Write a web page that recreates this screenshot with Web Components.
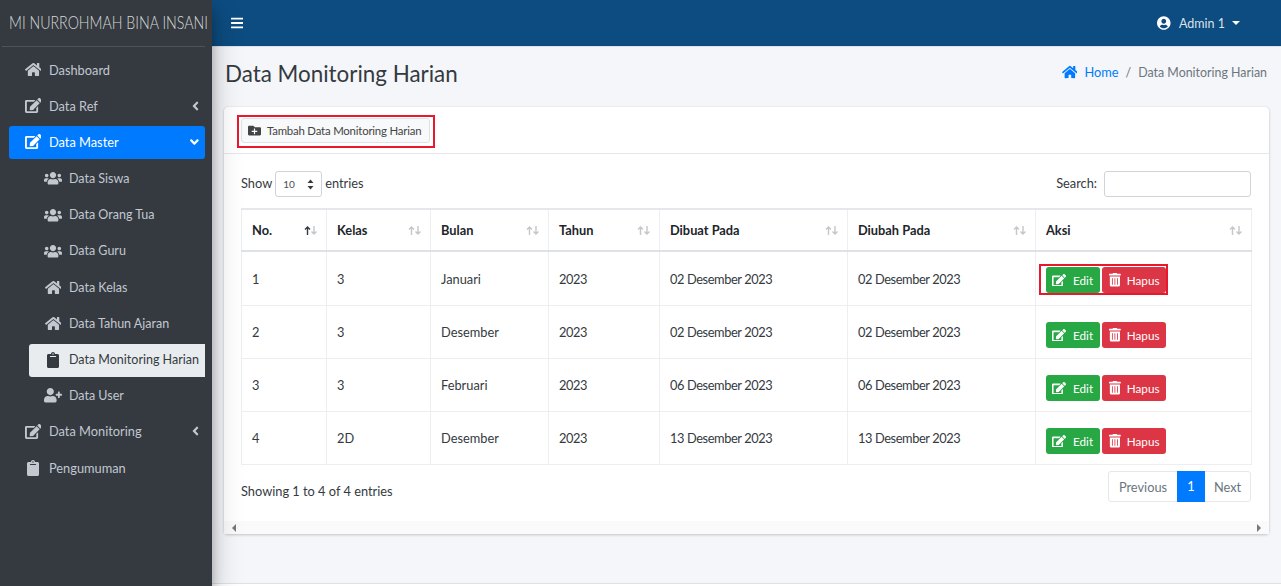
<!DOCTYPE html>
<html lang="id">
<head>
<meta charset="utf-8">
<title>Data Monitoring Harian</title>
<style>
  html, body { margin: 0; height: 100%; overflow: hidden; }
  body { display: flex; font-family: Lato, "Noto Sans", sans-serif; font-size: 12.8px; color: #343a40; background: #f4f6f9; }
</style>
</head>
<body>
<app-sidebar>
  <side-item icon="home">Dashboard</side-item>
  <side-item icon="edit" arrow="left">Data Ref</side-item>
  <side-item icon="edit" arrow="down" state="open">Data Master</side-item>
  <side-item icon="users" level="2">Data Siswa</side-item>
  <side-item icon="users" level="2">Data Orang Tua</side-item>
  <side-item icon="users" level="2">Data Guru</side-item>
  <side-item icon="home" level="2">Data Kelas</side-item>
  <side-item icon="home" level="2">Data Tahun Ajaran</side-item>
  <side-item icon="clipboard" level="2" state="current">Data Monitoring Harian</side-item>
  <side-item icon="userplus" level="2">Data User</side-item>
  <side-item icon="edit" arrow="left">Data Monitoring</side-item>
  <side-item icon="clipboard">Pengumuman</side-item>
</app-sidebar>
<app-main>
  <top-bar></top-bar>
  <page-header></page-header>
  <monitoring-card></monitoring-card>
</app-main>

<script>
const ICONS = {
  home: ['0 0 576 512', 'M280.37 148.26L96 300.11V464a16 16 0 0 0 16 16l112.06-.29a16 16 0 0 0 15.92-16V368a16 16 0 0 1 16-16h64a16 16 0 0 1 16 16v95.64a16 16 0 0 0 16 16.05L464 480a16 16 0 0 0 16-16V300L295.67 148.26a12.19 12.19 0 0 0-15.3 0zM571.6 251.47L488 182.56V44.05a12 12 0 0 0-12-12h-56a12 12 0 0 0-12 12v72.61L318.47 43a48 48 0 0 0-61 0L4.34 251.47a12 12 0 0 0-1.6 16.9l25.5 31A12 12 0 0 0 45.15 301l235.22-193.74a12.19 12.19 0 0 1 15.3 0L530.9 301a12 12 0 0 0 16.9-1.6l25.5-31a12 12 0 0 0-1.7-16.93z'],
  edit: ['0 0 576 512', 'M402.6 83.2l90.2 90.2c3.8 3.8 3.8 10 0 13.8L274.4 405.6l-92.8 10.3c-12.4 1.4-22.9-9.1-21.5-21.5l10.3-92.8L388.8 83.2c3.8-3.8 10-3.8 13.8 0zm162-22.9l-48.8-48.8c-15.2-15.2-39.9-15.2-55.2 0l-35.4 35.4c-3.8 3.8-3.8 10 0 13.8l90.2 90.2c3.8 3.8 10 3.8 13.8 0l35.4-35.4c15.2-15.3 15.2-40 0-55.2zM384 346.2V448H64V128h229.8c3.2 0 6.2-1.3 8.5-3.5l40-40c7.6-7.6 2.2-20.5-8.5-20.5H48C21.5 64 0 85.5 0 112v352c0 26.5 21.5 48 48 48h352c26.5 0 48-21.5 48-48V306.2c0-10.7-12.9-16-20.5-8.5l-40 40c-2.2 2.3-3.5 5.3-3.5 8.5z'],
  users: ['0 0 640 512', 'M96 224c35.3 0 64-28.7 64-64s-28.7-64-64-64-64 28.7-64 64 28.7 64 64 64zm448 0c35.3 0 64-28.7 64-64s-28.7-64-64-64-64 28.7-64 64 28.7 64 64 64zm32 32h-64c-17.6 0-33.5 7.1-45.1 18.6 40.3 22.1 68.9 62 75.1 109.4h66c17.7 0 32-14.3 32-32v-32c0-35.3-28.7-64-64-64zm-256 0c61.9 0 112-50.1 112-112S381.9 32 320 32 208 82.1 208 144s50.1 112 112 112zm76.8 32h-8.3c-20.8 10-43.9 16-68.5 16s-47.6-6-68.5-16h-8.3C179.6 288 128 339.6 128 403.2V432c0 26.5 21.5 48 48 48h288c26.5 0 48-21.5 48-48v-28.8c0-63.6-51.6-115.2-115.2-115.2zm-223.7-13.4C161.5 263.1 145.6 256 128 256H64c-35.3 0-64 28.7-64 64v32c0 17.7 14.3 32 32 32h65.9c6.3-47.4 34.9-87.3 75.2-109.4z'],
  clipboard: ['0 0 384 512', 'M384 112v352c0 26.51-21.49 48-48 48H48c-26.51 0-48-21.49-48-48V112c0-26.51 21.49-48 48-48h80c0-35.29 28.71-64 64-64s64 28.71 64 64h80c26.51 0 48 21.49 48 48zM192 40c-13.255 0-24 10.745-24 24s10.745 24 24 24 24-10.745 24-24-10.745-24-24-24m96 114v-20a6 6 0 0 0-6-6H102a6 6 0 0 0-6 6v20a6 6 0 0 0 6 6h180a6 6 0 0 0 6-6z'],
  userplus: ['0 0 640 512', 'M624 208h-64v-64c0-8.8-7.2-16-16-16h-32c-8.8 0-16 7.2-16 16v64h-64c-8.8 0-16 7.2-16 16v32c0 8.8 7.2 16 16 16h64v64c0 8.8 7.2 16 16 16h32c8.8 0 16-7.2 16-16v-64h64c8.8 0 16-7.2 16-16v-32c0-8.8-7.2-16-16-16zm-400 48c70.7 0 128-57.3 128-128S294.7 0 224 0 96 57.3 96 128s57.3 128 128 128zm89.6 32h-16.7c-22.2 10.2-46.9 16-72.9 16s-50.6-5.8-72.9-16h-16.7C60.2 288 0 348.2 0 422.4V464c0 26.5 21.5 48 48 48h352c26.5 0 48-21.5 48-48v-41.6c0-74.2-60.2-134.4-134.4-134.4z'],
  bars: ['0 0 448 512', 'M16 132h416c8.837 0 16-7.163 16-16V76c0-8.837-7.163-16-16-16H16C7.163 60 0 67.163 0 76v40c0 8.837 7.163 16 16 16zm0 160h416c8.837 0 16-7.163 16-16v-40c0-8.837-7.163-16-16-16H16c-8.837 0-16 7.163-16 16v40c0 8.837 7.163 16 16 16zm0 160h416c8.837 0 16-7.163 16-16v-40c0-8.837-7.163-16-16-16H16c-8.837 0-16 7.163-16 16v40c0 8.837 7.163 16 16 16z'],
  usercircle: ['0 0 496 512', 'M248 8C111 8 0 119 0 256s111 248 248 248 248-111 248-248S385 8 248 8zm0 96c48.6 0 88 39.4 88 88s-39.4 88-88 88-88-39.4-88-88 39.4-88 88-88zm0 344c-58.7 0-111.3-26.6-146.5-68.2 18.8-35.4 55.6-59.8 98.5-59.8 2.4 0 4.8.4 7.1 1.1 13 4.2 26.6 6.9 40.9 6.9 14.3 0 28-2.7 40.9-6.9 2.3-.7 4.7-1.1 7.1-1.1 42.9 0 79.7 24.4 98.5 59.8C359.3 421.4 306.7 448 248 448z'],
  trash: ['0 0 448 512', 'M32 464a48 48 0 0 0 48 48h288a48 48 0 0 0 48-48V128H32zm272-256a16 16 0 0 1 32 0v224a16 16 0 0 1-32 0zm-96 0a16 16 0 0 1 32 0v224a16 16 0 0 1-32 0zm-96 0a16 16 0 0 1 32 0v224a16 16 0 0 1-32 0zM432 32H312l-9.4-18.7A24 24 0 0 0 281.1 0H166.8a23.72 23.72 0 0 0-21.4 13.3L136 32H16A16 16 0 0 0 0 48v32a16 16 0 0 0 16 16h416a16 16 0 0 0 16-16V48a16 16 0 0 0-16-16z'],
  folderplus: ['0 0 512 512', 'M464 128H272l-64-64H48C21.49 64 0 85.49 0 112v288c0 26.51 21.49 48 48 48h416c26.51 0 48-21.49 48-48V176c0-26.51-21.49-48-48-48zm-96 168c0 8.84-7.16 16-16 16h-72v72c0 8.84-7.16 16-16 16h-16c-8.84 0-16-7.16-16-16v-72h-72c-8.84 0-16-7.16-16-16v-16c0-8.84 7.16-16 16-16h72v-72c0-8.84 7.16-16 16-16h16c8.84 0 16 7.16 16 16v72h72c8.84 0 16 7.16 16 16v16z'],
  left: ['0 0 256 512', 'M31.7 239l136-136c9.4-9.4 24.6-9.4 33.9 0l22.6 22.6c9.4 9.4 9.4 24.6 0 33.9L127.9 256l96.4 96.4c9.4 9.4 9.4 24.6 0 33.9L201.7 409c-9.4 9.4-24.6 9.4-33.9 0l-136-136c-9.5-9.4-9.5-24.6-.1-34z'],
  down: ['0 0 320 512', 'M143 352.3L7 216.3c-9.4-9.4-9.4-24.6 0-33.9l22.6-22.6c9.4-9.4 24.6-9.4 33.9 0l96.4 96.4 96.4-96.4c9.4-9.4 24.6-9.4 33.9 0l22.6 22.6c9.4 9.4 9.4 24.6 0 33.9l-136 136c-9.2 9.4-24.4 9.4-33.8 0z']
};

// icon markup, height in px; width follows the viewBox
function icon(name, h) {
  const [box, d] = ICONS[name];
  const w = box.split(' ')[2] / box.split(' ')[3] * h;
  return `<svg viewBox="${box}" width="${w}" height="${h}" fill="currentColor" aria-hidden="true" style="flex:none"><path d="${d}"/></svg>`;
}

class AppSidebar extends HTMLElement {
  connectedCallback() {
    this.attachShadow({ mode: 'open' });
    this.shadowRoot.innerHTML = `
      <style>
        :host { display: block; flex: 0 0 212px; width: 212px; height: 586px; background: #343a40; position: relative; z-index: 2;
          box-shadow: 0 14px 28px rgba(0,0,0,.25), 0 10px 10px rgba(0,0,0,.22); box-sizing: border-box; }
        .brand { height: 47px; margin: 0 7px 0 2px; box-sizing: border-box; padding-left: 7px; border-bottom: 1px solid #4b545c;
          display: flex; align-items: center; white-space: nowrap; color: rgba(255,255,255,.8); font-size: 16.6px; font-weight: 300; }
        .brand span { display: inline-block; transform: scaleX(.855); transform-origin: left center; }
        nav { display: flex; flex-direction: column; gap: 3.2px; padding: 7px 7px 0 9px; }
      </style>
      <div class="brand"><span>MI NURROHMAH BINA INSANI</span></div>
      <nav><slot></slot></nav>
    `;
  }
}

class SideItem extends HTMLElement {
  connectedCallback() {
    const name = this.getAttribute('icon');
    const arrow = this.getAttribute('arrow');
    const h = { home: 15, edit: 15, users: 14.4, clipboard: 16, userplus: 14.4 }[name];
    this.attachShadow({ mode: 'open' });
    this.shadowRoot.innerHTML = `
      <style>
        :host { display: flex; align-items: center; height: 33px; box-sizing: border-box; padding-bottom: 2px; border-radius: 3px; color: #c2c7d0; white-space: nowrap;
          padding-left: 14px; position: relative; }
        :host([level="2"]) { margin-left: 20px; padding-left: 14px; padding-bottom: 1px; font-size: 12.5px; }
        :host([state="open"]) { background: #007bff; color: #fff; }
        :host([state="current"]) { background: #e9ecef; color: #343a40; border-radius: 3px 0 0 3px; }
        .ico { flex: 0 0 20px; width: 20px; margin-right: 6px; display: flex; justify-content: center; }
        .arrow { position: absolute; right: 6px; top: 0; bottom: 2px; display: flex; align-items: center; }
      </style>
      <span class="ico">${icon(name, h)}</span>
      <slot></slot>
      ${arrow ? `<span class="arrow">${icon(arrow, 14)}</span>` : ''}
    `;
  }
}

class AppMain extends HTMLElement {
  connectedCallback() {
    this.attachShadow({ mode: 'open' });
    this.shadowRoot.innerHTML = `
      <style>
        :host { display: flex; flex-direction: column; flex: 1; min-width: 0; height: 586px; position: relative; }
        .foot { position: absolute; left: 0; right: 0; bottom: 0; height: 2px; background: #fff; border-top: 1px solid #dee2e6; }
      </style>
      <slot></slot>
      <div class="foot"></div>
    `;
  }
}

class TopBar extends HTMLElement {
  connectedCallback() {
    this.attachShadow({ mode: 'open' });
    this.shadowRoot.innerHTML = `
      <style>
        :host { display: flex; align-items: center; justify-content: space-between; height: 47px; flex: none; box-sizing: border-box;
          background: #0d4c80; color: #fff; padding: 0 41px 0 19px; border-bottom: 1px solid #dee2e6; }
        .user { display: flex; align-items: center; gap: 8px; color: rgba(255,255,255,.85); font-size: 12.5px; }
        .user svg { color: #fff; }
        .caret { width: 0; height: 0; border-top: 4px solid #fff; border-left: 4px solid transparent; border-right: 4px solid transparent; margin-left: -1px; }
      </style>
      ${icon('bars', 14)}
      <div class="user">${icon('usercircle', 14)}<span>Admin 1</span><i class="caret"></i></div>
    `;
  }
}

class PageHeader extends HTMLElement {
  connectedCallback() {
    this.attachShadow({ mode: 'open' });
    this.shadowRoot.innerHTML = `
      <style>
        :host { display: flex; align-items: center; justify-content: space-between; height: 60px; flex: none; padding: 0 14px 0 13px; }
        h1 { margin: 0 0 7px; font-size: 22.4px; font-weight: 400; color: #343a40; }
        .crumb { display: flex; align-items: center; gap: 7px; margin-bottom: 10px; color: #6c757d; font-size: 12.4px; }
        .home { display: flex; align-items: center; gap: 7px; color: #007bff; font-size: 12.8px; }
      </style>
      <h1>Data Monitoring Harian</h1>
      <div class="crumb"><span class="home">${icon('home', 14)}<span>Home</span></span><span>/</span><span>Data Monitoring Harian</span></div>
    `;
  }
}

class MonitoringCard extends HTMLElement {
  connectedCallback() {
    this.attachShadow({ mode: 'open' });
    this.shadowRoot.innerHTML = `
      <style>
        :host { display: block; margin: 0 12px; height: 427px; flex: none; box-sizing: border-box; background: #fff; border-radius: 4px;
          box-shadow: 0 0 1px rgba(0,0,0,.125), 0 1px 3px rgba(0,0,0,.2); position: relative; }
        .head { height: 47px; box-sizing: border-box; border-bottom: 1px solid #e5e7ea; padding: 8px 0 0 13px; }
        .mark { display: inline-block; border: 2px solid #e8192c; padding: 1px 3px 1px 2px; height: 33px; box-sizing: border-box; }
        button.add { display: flex; align-items: center; gap: 6px; height: 25px; width: 189px; box-sizing: border-box; padding: 0 0 0 6px; margin: 0; background: #f8f9fa;
          border: 1px solid #dfe2e5; border-radius: 3px; font: inherit; font-size: 11.4px; letter-spacing: -.2px; color: #444; white-space: nowrap; }
        .body { padding: 17px 18px 0 17px; }
        .top { display: flex; justify-content: space-between; height: 26px; }
        .len, .search { display: flex; align-items: flex-start; line-height: 24px; gap: 3px; }
        .sel { width: 47px; height: 26px; box-sizing: border-box; border: 1px solid #ced4da; border-radius: 3px; display: flex; align-items: center;
          justify-content: space-between; padding: 0 7px 0 7px; font-size: 10px; color: #495057; }
        .sel svg { display: block; }
        .search { gap: 7px; }
        .search i { display: block; width: 147px; height: 26px; box-sizing: border-box; border: 1px solid #ced4da; border-radius: 3px; }
        monitoring-table { margin-top: 11px; }
        .foot { display: flex; justify-content: space-between; margin-top: 6px; }
        .info { padding-top: 12px; }
        .pages { display: flex; height: 31px; box-sizing: border-box; padding-top: 1px; border: 1px solid #e5e7ea; border-radius: 3px; color: #6c757d; align-items: center; text-align: center; }
        .pages span:first-child { width: 68px; }
        .pages span:last-child { width: 45px; }
        .pages b { align-self: stretch; margin: -2px 0 -1px; width: 28px; background: #007bff; color: #fff; display: flex; align-items: center; justify-content: center; font-weight: 400; }
        .bar { position: absolute; left: 0; right: 0; bottom: 0; height: 13px; background: #fafafa; display: flex; justify-content: space-between; align-items: center; padding: 0 8px; box-sizing: border-box; }
        .bar i { width: 0; height: 0; border-top: 4px solid transparent; border-bottom: 4px solid transparent; }
        .bar i:first-child { border-right: 4px solid #777; }
        .bar i:last-child { border-left: 4px solid #777; }
      </style>
      <div class="head"><div class="mark"><button class="add">${icon('folderplus', 13)}<span>Tambah Data Monitoring Harian</span></button></div></div>
      <div class="body">
        <div class="top">
          <div class="len">Show <span class="sel"><span>10</span><svg width="7" height="11" viewBox="0 0 7 11" fill="#343a40"><path d="M3.5 0.5L6.5 4H.5zM3.5 10.5L.5 7h6z"/></svg></span> entries</div>
          <div class="search">Search: <i></i></div>
        </div>
        <monitoring-table></monitoring-table>
        <div class="foot">
          <div class="info">Showing 1 to 4 of 4 entries</div>
          <div class="pages"><span>Previous</span><b>1</b><span>Next</span></div>
        </div>
      </div>
      <div class="bar"><i></i><i></i></div>
    `;
  }
}

class RowActions extends HTMLElement {
  connectedCallback() {
    this.attachShadow({ mode: 'open' });
    this.shadowRoot.innerHTML = `
      <style>
        :host { display: inline-flex; gap: 2px; padding: 1px 0 0 5px; border: 2px solid transparent; margin-left: -7px; color: #fff; font-size: 11.7px; vertical-align: middle; }
        :host([marked]) { border-color: #e8192c; }
        a { display: flex; align-items: center; height: 26px; box-sizing: border-box; border-radius: 3px; }
        .e { background: #28a745; width: 54px; padding-left: 6px; gap: 7px; }
        .h { background: #dc3545; width: 64px; padding-left: 7px; gap: 6px; }
      </style>
      <a class="e">${icon('edit', 12.5)}<span>Edit</span></a>
      <a class="h">${icon('trash', 13.5)}<span>Hapus</span></a>
    `;
  }
}

class MonitoringTable extends HTMLElement {
  connectedCallback() {
    const cols = ['No.', 'Kelas', 'Bulan', 'Tahun', 'Dibuat Pada', 'Diubah Pada', 'Aksi'];
    const rows = [
      ['1', '3', 'Januari', '2023', '02 Desember 2023', '02 Desember 2023'],
      ['2', '3', 'Desember', '2023', '02 Desember 2023', '02 Desember 2023'],
      ['3', '3', 'Februari', '2023', '06 Desember 2023', '06 Desember 2023'],
      ['4', '2D', 'Desember', '2023', '13 Desember 2023', '13 Desember 2023']
    ];
    const arrows = (on) => `<svg width="14" height="9" viewBox="0 0 14 9" fill="none" stroke-width="1.4">
      <path d="M3.5 9V1M1 3.5L3.5 1L6 3.5" stroke="${on ? '#343a40' : '#c4c6c9'}"/>
      <path d="M10 0V8M7.5 5.5L10 8L12.5 5.5" stroke="#c4c6c9"/></svg>`;
    this.attachShadow({ mode: 'open' });
    this.shadowRoot.innerHTML = `
      <style>
        :host { display: block; }
        table { width: 1010px; border-collapse: collapse; table-layout: fixed; }
        th, td { border: 1px solid #eceef0; padding: 0 0 0 10px; text-align: left; box-sizing: border-box; }
        th { height: 42px; border-top: 2px solid #e5e7ea; border-bottom: 2px solid #dee2e6; font-weight: 700; color: #212529; }
        th div { display: flex; justify-content: space-between; align-items: center; padding-right: 8px; }
        td { height: 53px; color: #343a40; }
        tr:first-child td { height: 54px; padding-top: 1px; }
        td:nth-child(n+4):nth-child(-n+6) { letter-spacing: -.4px; }
        td:last-child { padding-top: 6px; }
        tr:first-child td:last-child { padding-top: 2px; }
      </style>
      <table>
        <colgroup><col style="width:85px"><col style="width:104px"><col style="width:118px"><col style="width:111px"><col style="width:188px"><col style="width:188px"><col style="width:216px"></colgroup>
        <thead><tr>${cols.map((c, i) => `<th><div>${c}${arrows(i === 0)}</div></th>`).join('')}</tr></thead>
        <tbody>${rows.map((r, i) => `<tr>${r.map(c => `<td>${c}</td>`).join('')}<td><row-actions${i === 0 ? ' marked' : ''}></row-actions></td></tr>`).join('')}</tbody>
      </table>
    `;
  }
}

customElements.define('app-sidebar', AppSidebar);
customElements.define('side-item', SideItem);
customElements.define('app-main', AppMain);
customElements.define('top-bar', TopBar);
customElements.define('page-header', PageHeader);
customElements.define('monitoring-card', MonitoringCard);
customElements.define('row-actions', RowActions);
customElements.define('monitoring-table', MonitoringTable);
</script>
</body>
</html>
